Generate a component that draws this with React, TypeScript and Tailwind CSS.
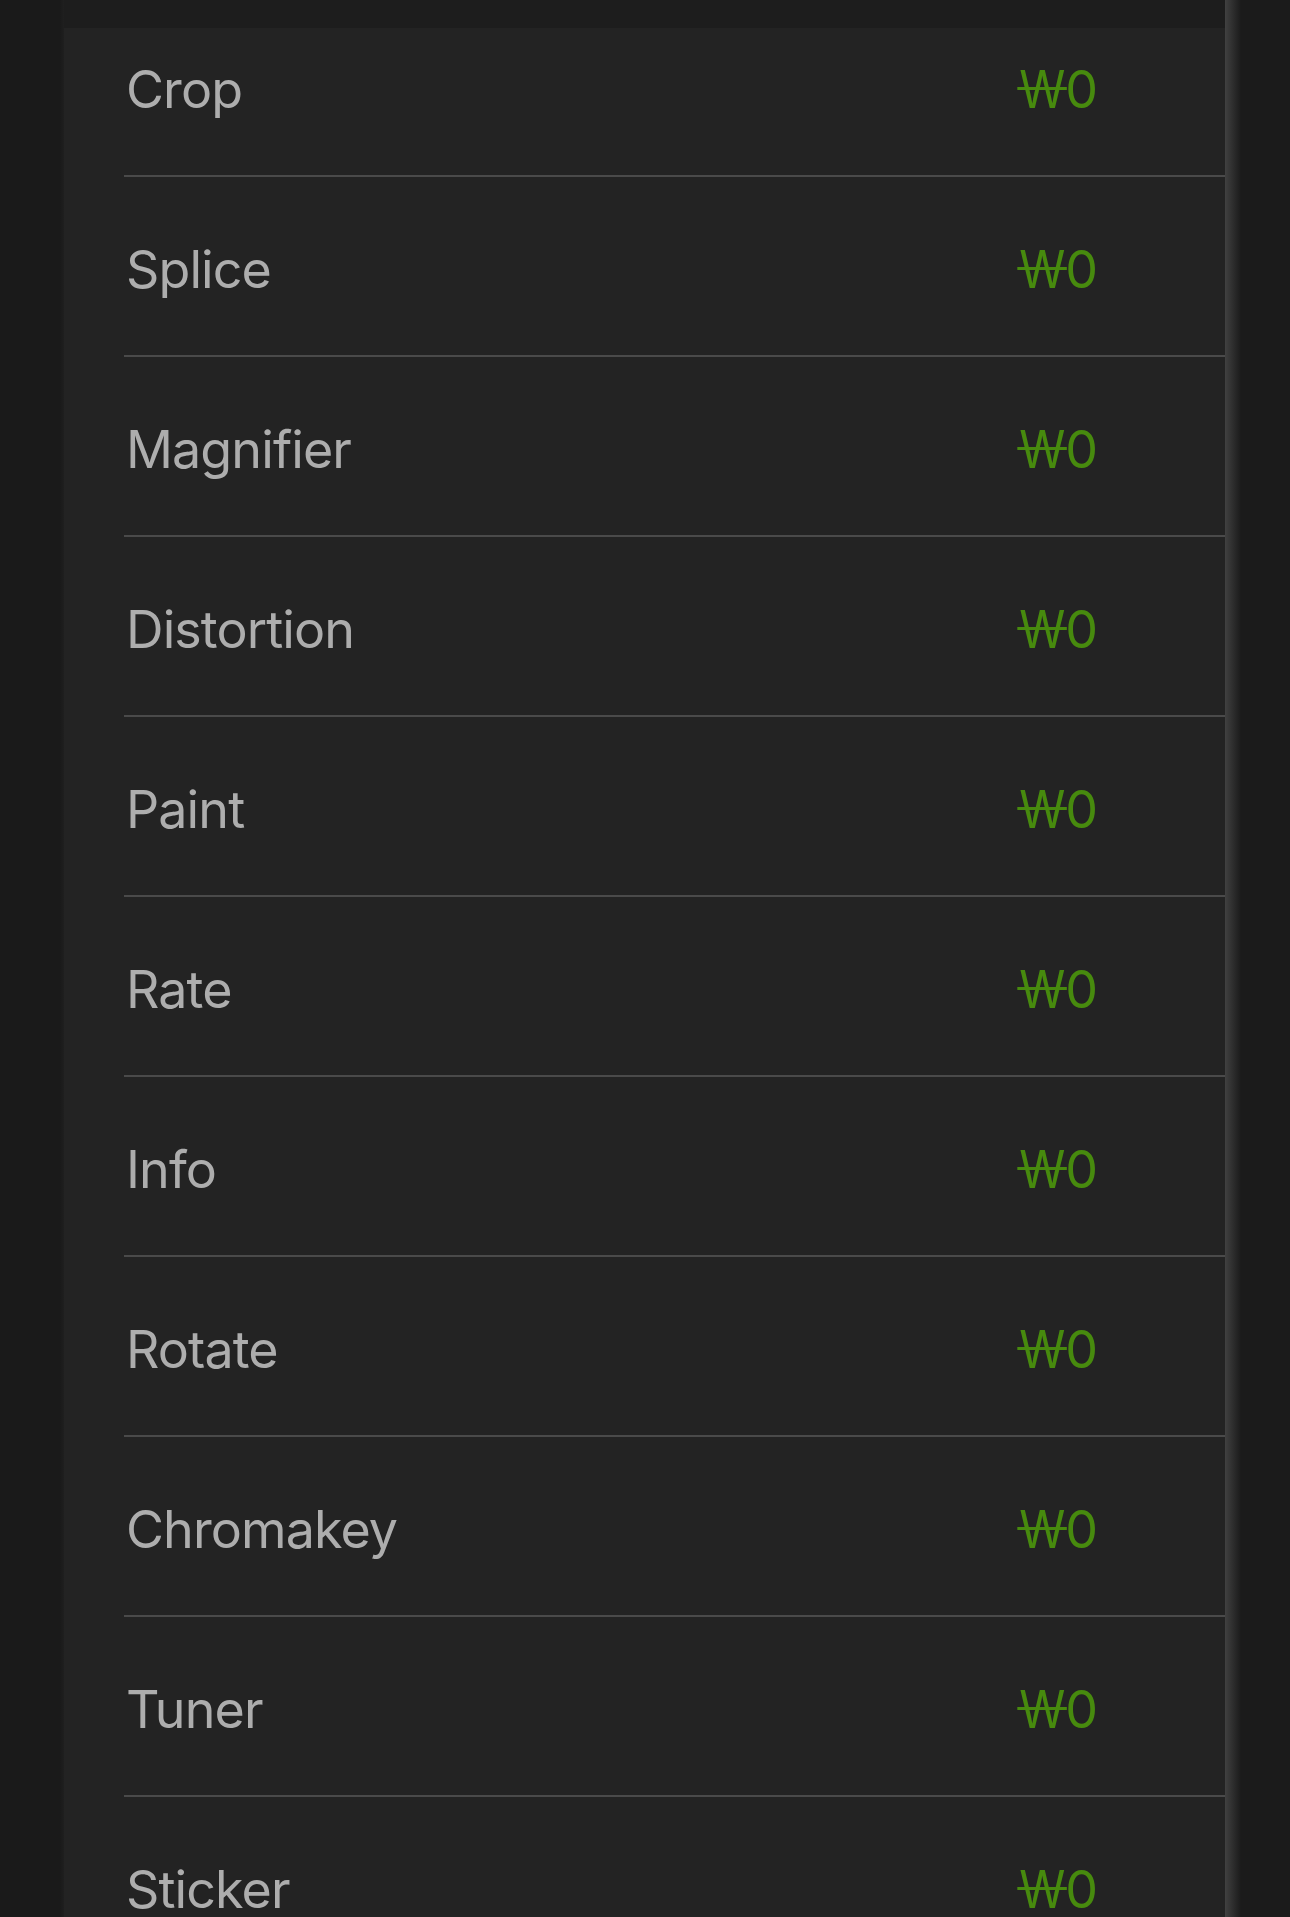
import React from "react";

const items = [
  "Crop",
  "Splice",
  "Magnifier",
  "Distortion",
  "Paint",
  "Rate",
  "Info",
  "Rotate",
  "Chromakey",
  "Tuner",
  "Sticker",
];

function Won() {
  return (
    <span className="relative inline-block scale-x-[0.9] origin-right">
      W
      <span className="absolute left-[-2px] right-[-2px] top-[45%] h-[3px] bg-[#478a0e]" />
    </span>
  );
}

export default function App() {
  return (
    <div
      className="w-[1290px] h-[1917px] overflow-hidden bg-[#1b1b1b] flex"
      style={{ fontFamily: 'Inter, "Noto Sans", sans-serif' }}
    >
      <div className="w-[60px] shrink-0 bg-[#1a1a1a]" />
      <div className="w-[4px] shrink-0 bg-gradient-to-r from-[#1a1a1a] to-[#1f1f1f]" />
      <div className="w-[1161px] shrink-0 bg-[#232323] relative overflow-hidden">
        <div className="absolute top-0 left-0 right-0 h-[28px] bg-[#1d1d1d] z-10" />
        <div className="flex flex-col mt-[-3px]">
          {items.map((name) => (
            <div
              key={name}
              className="ml-[60px] h-[180px] shrink-0 border-b-2 border-[#4a4a4a] flex items-center justify-between pl-[2px] pr-[127px] pt-[8px]"
            >
              <span className="text-[52px] leading-none tracking-[-0.9px] text-[#adadad]">
                {name}
              </span>
              <span className="text-[52px] leading-none text-[#478a0e] flex items-baseline">
                <Won />
                <span>0</span>
              </span>
            </div>
          ))}
        </div>
      </div>
      <div className="w-[16px] shrink-0 bg-gradient-to-r from-[#414141] to-[#1b1b1b]" />
      <div className="flex-1 bg-[#1b1b1b]" />
    </div>
  );
}
